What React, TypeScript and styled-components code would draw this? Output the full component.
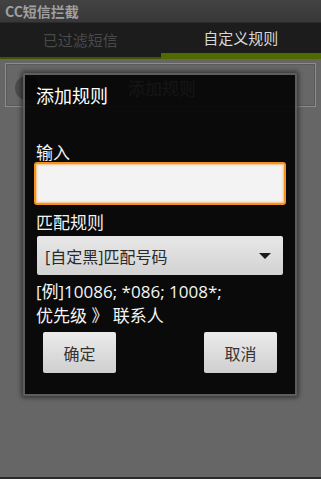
import React from 'react';
import styled, { createGlobalStyle } from 'styled-components';

const GlobalStyle = createGlobalStyle`
    html, body {
        margin: 0;
        padding: 0;
        background: #666666;
    }
    body {
        font-family: "Open Sans", "Noto Sans CJK SC", sans-serif;
    }
`;

const Screen = styled.div`
    position: relative;
    width: 321px;
    height: 479px;
    overflow: hidden;
    background: #666666;
    display: flex;
    flex-direction: column;
    border-bottom: 2px solid #2a2a2a;
    box-sizing: border-box;
`;

const TitleBar = styled.div`
    height: 23px;
    flex: none;
    display: flex;
    align-items: center;
    padding-left: 5px;
    background: linear-gradient(#434343, #383838);
    border-bottom: 1px solid #2a2a2a;
    box-sizing: border-box;
    color: #a0a0a0;
    font-size: 14px;
    font-weight: bold;
    font-family: "Noto Sans CJK SC", sans-serif;
`;

const TabBar = styled.div`
    height: 36px;
    flex: none;
    display: flex;
    background: #1c1c1c;
`;

const Tab = styled.div<{ active: boolean }>`
    flex: 1;
    position: relative;
    display: flex;
    align-items: center;
    justify-content: center;
    padding-bottom: 2px;
    box-sizing: border-box;
    font-size: 15px;
    font-family: "Noto Sans CJK SC", sans-serif;
    color: ${props => props.active ? "#d8d8d8" : "#4a4a4a"};
    border-bottom: ${props => props.active ? "6px solid #4f6b00" : "2px solid #3f5500"};
    & + & {
        &::before {
            content: "";
            position: absolute;
            left: 0;
            top: 8px;
            height: 20px;
            width: 1px;
            background: #8a8a8a;
        }
    }
`;

const Content = styled.div`
    flex: 1;
    padding: 4px 5px 0 5px;
`;

const RuleCard = styled.div`
    height: 44px;
    display: flex;
    align-items: center;
    border: 1px solid #8c8c8c;
    box-shadow: inset 0 0 0 1px #5a5a5a;
    background: #676767;
    box-sizing: border-box;
    padding-left: 9px;
`;

const RuleIcon = styled.div`
    width: 24px;
    height: 24px;
    border-radius: 50%;
    background: #4a4a4a;
    margin-top: 6px;
`;

const RuleText = styled.div`
    flex: 1;
    text-align: center;
    color: #d0d0d0;
    font-size: 17px;
    padding-right: 30px;
    margin-top: 4px;
    font-family: "Noto Sans CJK SC", sans-serif;
`;

const Dialog = styled.div`
    position: absolute;
    left: 23px;
    top: 73px;
    width: 274px;
    height: 323px;
    box-sizing: border-box;
    background: rgba(0, 0, 0, 0.9);
    border: 2px solid #5e5e5e;
    border-radius: 2px;
    box-shadow: 0 0 4px 2px rgba(0, 0, 0, 0.45);
    display: flex;
    flex-direction: column;
    padding: 8px 9px 0 9px;
    color: #f2f2f2;
    font-family: "Noto Sans CJK SC", sans-serif;
`;

const DialogTitle = styled.div`
    font-size: 18px;
    line-height: 24px;
    padding-left: 2px;
    color: #ffffff;
`;

const FieldLabel = styled.div<{ gap: number }>`
    margin-top: ${props => props.gap}px;
    font-size: 17px;
    line-height: 20px;
    padding-left: 2px;
`;

const TextInput = styled.input`
    height: 43px;
    width: 100%;
    box-sizing: border-box;
    border: 2px solid #f3921e;
    border-radius: 3px;
    background: #f3f3f3;
    box-shadow: inset 0 0 2px 1px #f8c080;
    outline: none;
    font-size: 16px;
    padding: 0 8px;
`;

const Spinner = styled.div`
    margin: 4px 3px 0 3px;
    height: 39px;
    display: flex;
    align-items: center;
    justify-content: space-between;
    padding: 0 12px 0 8px;
    border-radius: 2px;
    background: linear-gradient(#e8e8e8, #d2d2d2);
    color: #2a2a2a;
    font-size: 16px;
    font-family: "Open Sans", "Noto Sans CJK SC", sans-serif;
`;

const Arrow = styled.div`
    width: 0;
    height: 0;
    border-left: 6px solid transparent;
    border-right: 6px solid transparent;
    border-top: 6px solid #1a1a1a;
`;

const Example = styled.div`
    margin-top: 5px;
    font-size: 17px;
    line-height: 24px;
    padding-left: 2px;
    color: #f5f5f5;
    font-family: "Open Sans", "Noto Sans CJK SC", sans-serif;
`;

const ButtonRow = styled.div`
    margin-top: 4px;
    display: flex;
    justify-content: space-between;
    padding: 0 9px 0 9px;
`;

const DialogButton = styled.button`
    width: 73px;
    height: 41px;
    border: none;
    border-radius: 2px;
    background: linear-gradient(#ebebeb, #cfcfcf);
    color: #333333;
    font-size: 16px;
    font-family: "Noto Sans CJK SC", sans-serif;
    padding: 0;
`;

export default function App() {
    return (
        <>
            <GlobalStyle />
            <Screen>
                <TitleBar>CC短信拦截</TitleBar>
                <TabBar>
                    <Tab active={false}>已过滤短信</Tab>
                    <Tab active={true}>自定义规则</Tab>
                </TabBar>
                <Content>
                    <RuleCard>
                        <RuleIcon />
                        <RuleText>添加规则</RuleText>
                    </RuleCard>
                </Content>
                <Dialog>
                    <DialogTitle>添加规则</DialogTitle>
                    <FieldLabel gap={35}>输入</FieldLabel>
                    <TextInput />
                    <FieldLabel gap={7}>匹配规则</FieldLabel>
                    <Spinner>
                        <span>[自定黑]匹配号码</span>
                        <Arrow />
                    </Spinner>
                    <Example>
                        [例]10086; *086; 1008*;<br />
                        优先级 》 联系人
                    </Example>
                    <ButtonRow>
                        <DialogButton>确定</DialogButton>
                        <DialogButton>取消</DialogButton>
                    </ButtonRow>
                </Dialog>
            </Screen>
        </>
    );
}
